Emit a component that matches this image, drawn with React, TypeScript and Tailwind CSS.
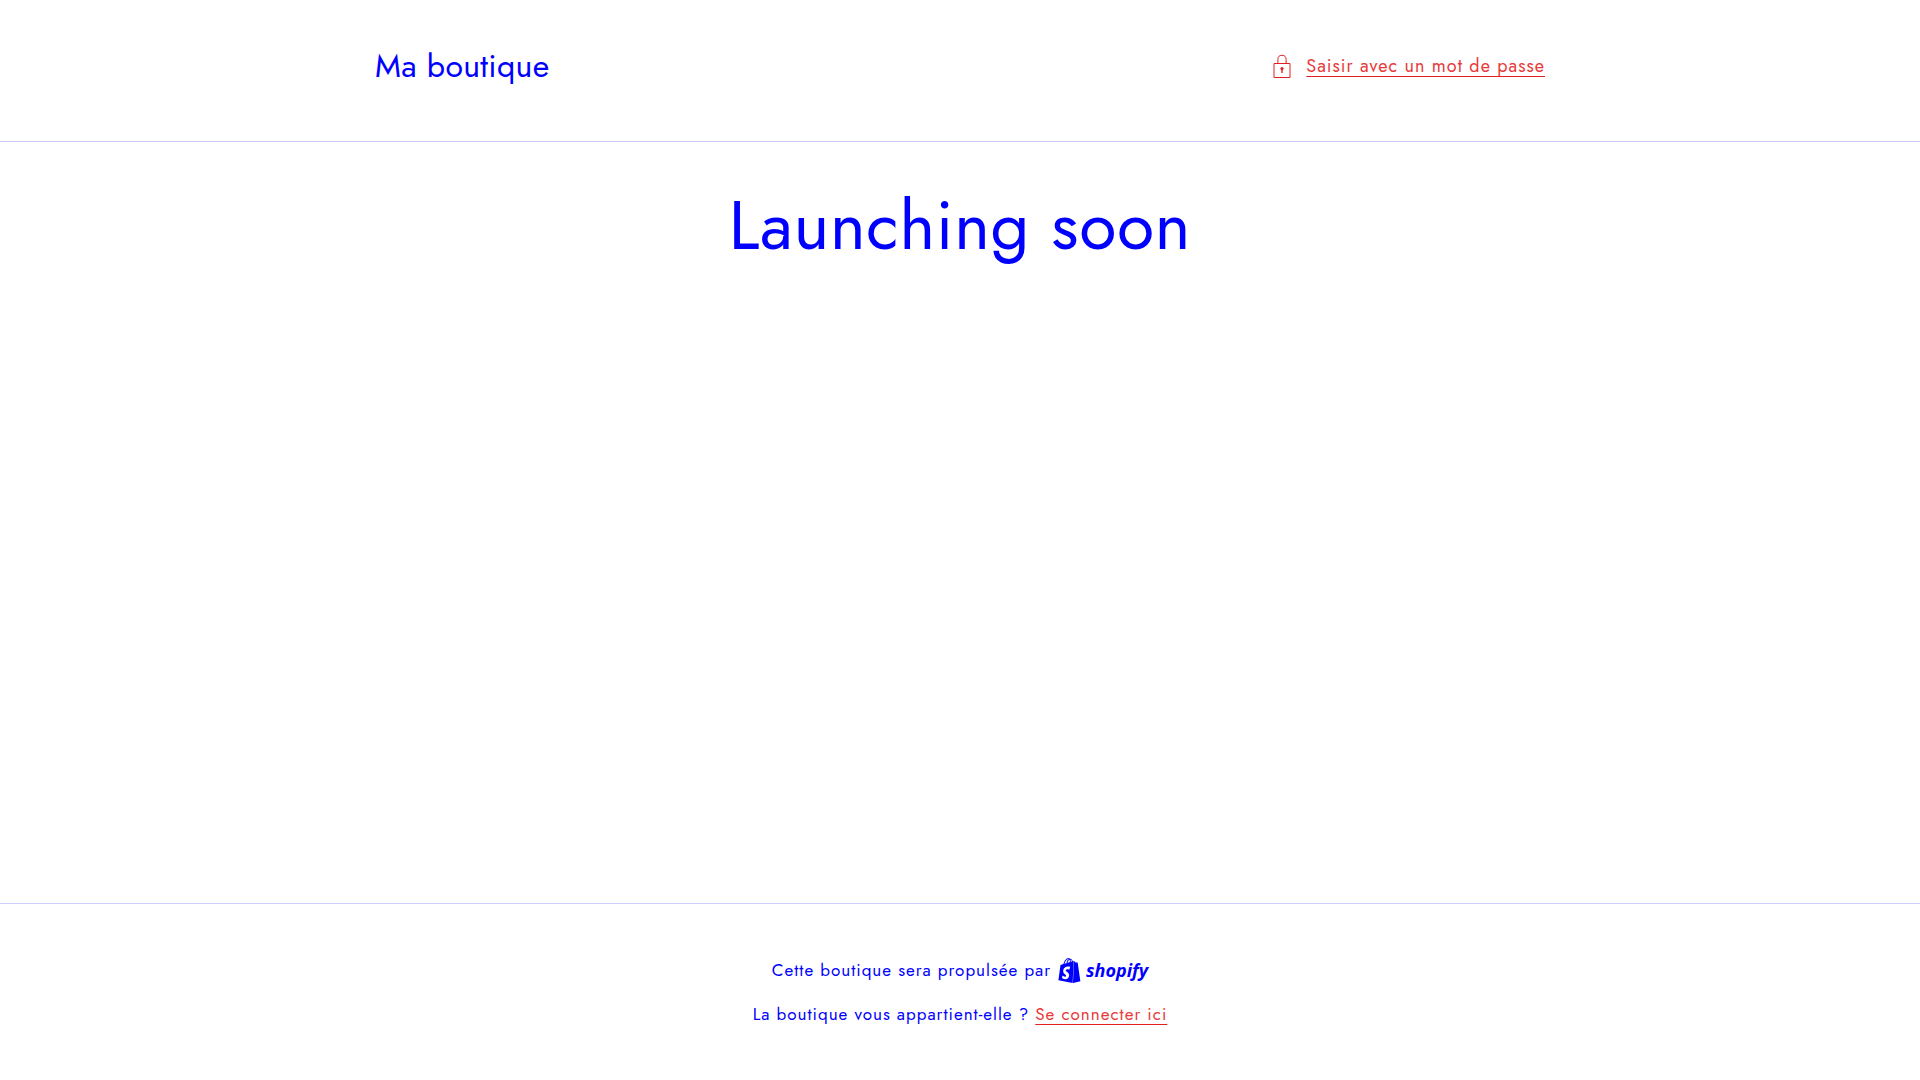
import { SiShopify } from "react-icons/si";

const linkStyle =
  "text-[#e83a3a] underline decoration-[#e32021] decoration-1 underline-offset-4 hover:decoration-2";

const LockIcon = () => (
  <svg
    aria-hidden="true"
    viewBox="0 0 18 24"
    fill="none"
    stroke="currentColor"
    className="h-6 w-[18px]"
  >
    <path d="M1 9.5h16v14H1z" />
    <path d="M4.9 9V5.4a4.1 4.1 0 0 1 8.2 0V9" />
    <circle cx="9" cy="14.6" r="1.6" fill="currentColor" stroke="none" />
    <path d="M9 14.5v4.5" strokeWidth="1.4" />
  </svg>
);

const Header = () => {
  return (
    <header className="border-b border-[#ccccff] pt-11 pb-[53px]">
      <div className="mx-auto flex max-w-[1170px] items-center justify-between">
        <h1 className="text-[32px] leading-11 tracking-[0.01em]">
          Ma boutique
        </h1>
        <button
          type="button"
          className="flex cursor-pointer items-center gap-[15px] text-lg leading-7 tracking-[1px] text-[#e32021]"
        >
          <LockIcon />
          <span className={linkStyle}>Saisir avec un mot de passe</span>
        </button>
      </div>
    </header>
  );
};

const Footer = () => {
  return (
    <footer className="flex flex-col items-center gap-4 border-t border-[#ccccff] py-[52px] text-[17px] leading-7 tracking-[1px]">
      <p className="flex items-center gap-1.5">
        Cette boutique sera propulsée par
        <a
          href="https://www.shopify.com"
          aria-label="Shopify"
          className="flex items-center gap-1"
        >
          <SiShopify className="size-[25px]" />
          <span className="font-['Open_Sans',sans-serif] text-lg leading-7 font-bold tracking-normal italic">
            shopify
          </span>
        </a>
      </p>
      <p>
        La boutique vous appartient-elle ?{" "}
        <a href="/admin" className={linkStyle}>
          Se connecter ici
        </a>
      </p>
    </footer>
  );
};

const App = () => {
  return (
    <div className="flex min-h-screen flex-col bg-white font-['Jost','Lato',sans-serif] text-[#0000ff]">
      <Header />
      <main className="flex-1 px-12 pt-10 text-center">
        <h2 className="text-[68px] leading-[88px] tracking-[0.01em]">
          Launching soon
        </h2>
      </main>
      <Footer />
    </div>
  );
};

export default App;
